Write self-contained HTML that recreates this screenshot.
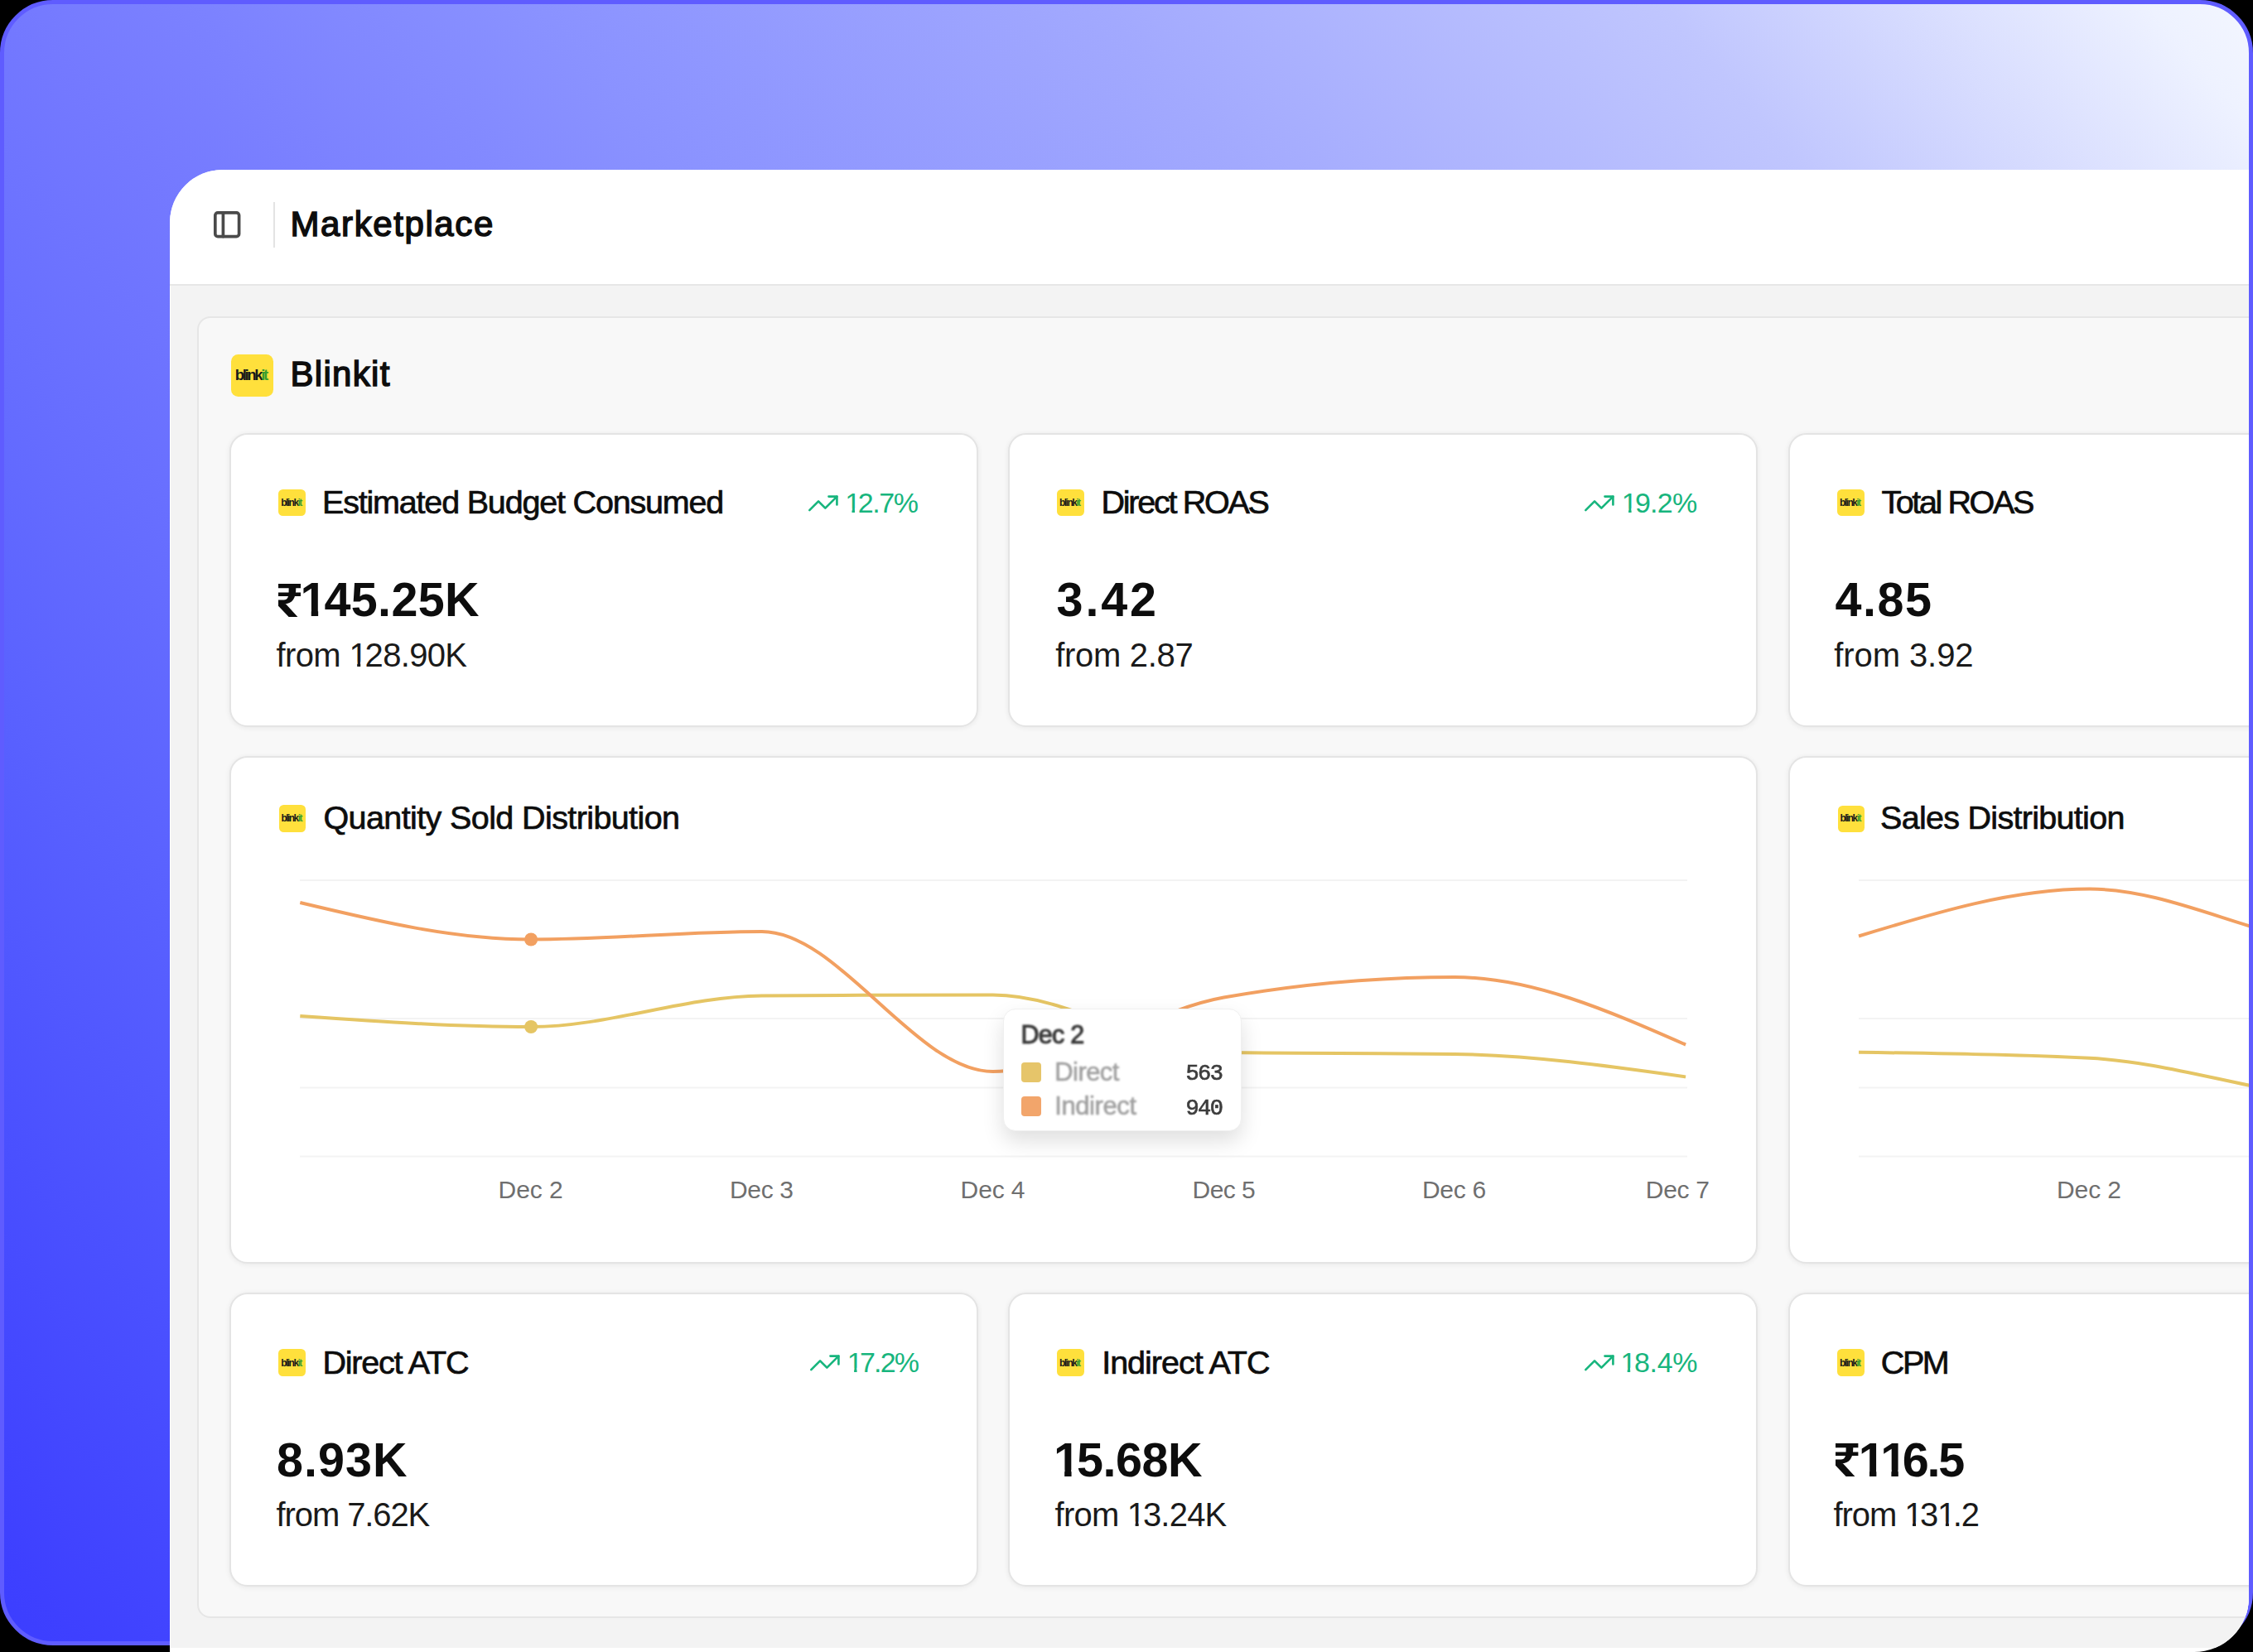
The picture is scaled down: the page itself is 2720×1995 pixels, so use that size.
<!DOCTYPE html><html><head><meta charset="utf-8"><style>
*{box-sizing:border-box;margin:0;padding:0}
html,body{width:2720px;height:1995px;overflow:hidden;background:#000}
body{position:relative;font-family:'Liberation Sans', sans-serif}
.abs,.t,.logo,.card,.panel,.tip{position:absolute}
.t{white-space:nowrap}
.frame{position:absolute;left:0;top:0;width:2720px;height:1987px;border-radius:64px;border:5px solid #5f5cff;
 background:linear-gradient(50deg, #3c3eff 0%, #3e40ff 2.08%, #4a50ff 11.55%, #5860ff 21.05%, #686fff 30.76%, #7479ff 38.14%, #8a92ff 52.69%, #a2a9fe 68.26%, #c0c6fe 83.82%, #eef2ff 97.24%, #f3f6ff 100%)}
.win{position:absolute;left:205px;top:205px;width:2510px;height:1790px;background:#fff;border-top-left-radius:64px;border-bottom-right-radius:66px;overflow:hidden}
.inner{position:absolute;left:-205px;top:-205px;width:2720px;height:1995px}
.hdr{position:absolute;left:205px;top:205px;width:2515px;height:140px;background:#fff;border-bottom:2px solid #e6e6e6}
.panel{left:237.8px;top:382px;width:2600px;height:1571.5px;background:#f8f8f8;border:2px solid #e6e6e6;border-radius:16px}
.card{background:#fff;border:2px solid #e4e4e4;border-radius:22px;box-shadow:0 1px 6px rgba(0,0,0,0.07)}
.logo{background:#ffe03c;display:flex;align-items:center;justify-content:center;overflow:hidden}
.logo span{font-family:'Liberation Sans', sans-serif;font-weight:700;color:#1a1a1a;line-height:1}
.logo b{color:#3a9e2f;font-weight:700}
.tip{left:1211px;top:1217.6px;width:288.3px;height:148px;background:#fff;border-radius:15px;border:1px solid #f0f0f0;box-shadow:0 12px 26px rgba(0,0,0,0.13)}
</style></head><body>
<div class="frame"></div>
<div class="win"><div class="inner">
<div class="hdr"></div><div class="abs" style="left:206.2px;top:345px;width:2520px;height:1645px;background:#f3f3f3"></div>
<svg class="abs" style="left:255.4px;top:251.8px" width="38.4" height="38.4" viewBox="0 0 24 24" fill="none" stroke="#4a4a4a" stroke-width="2.3" stroke-linecap="round" stroke-linejoin="round"><rect x="3" y="3" width="18" height="18" rx="2"/><path d="M9 3v18"/></svg>
<div class="abs" style="left:330px;top:244px;width:2px;height:55px;background:#e3e3e3"></div>
<div class="t" style="left:350.50px;top:250.14px;font-size:42.00px;line-height:42.00px;font-weight:400;color:#0d0d0d;letter-spacing:1.600px;font-family:'Liberation Sans', sans-serif;-webkit-text-stroke:1.5px #0d0d0d;">Marketplace</div>
<div class="panel"></div>
<div class="logo" style="left:279.30px;top:428.00px;width:50.50px;height:50.50px;border-radius:8.5px"><span style="font-size:18.68px;letter-spacing:-2.43px;margin-top:1.01px;margin-left:-3.54px">blink<b style="-webkit-text-stroke-color:#3a9e2f">it</b></span></div>
<div class="t" style="left:350.50px;top:430.94px;font-size:42.00px;line-height:42.00px;font-weight:400;color:#0d0d0d;letter-spacing:1.301px;font-family:'Liberation Sans', sans-serif;-webkit-text-stroke:1.5px #0d0d0d;">Blinkit</div>
<div class="card" style="left:276.7px;top:522.5px;width:904.5px;height:355.5px"></div>
<div class="logo" style="left:336.40px;top:590.90px;width:32.50px;height:32.50px;border-radius:5.5px"><span style="font-size:12.03px;letter-spacing:-1.56px;margin-top:0.65px;margin-left:-2.28px">blink<b style="-webkit-text-stroke-color:#3a9e2f">it</b></span></div>
<div class="card" style="left:276.7px;top:1560.8px;width:904.5px;height:355.5px"></div>
<div class="logo" style="left:336.40px;top:1629.20px;width:32.50px;height:32.50px;border-radius:5.5px"><span style="font-size:12.03px;letter-spacing:-1.56px;margin-top:0.65px;margin-left:-2.28px">blink<b style="-webkit-text-stroke-color:#3a9e2f">it</b></span></div>
<div class="card" style="left:1217.4px;top:522.5px;width:904.5px;height:355.5px"></div>
<div class="logo" style="left:1276.20px;top:590.90px;width:32.50px;height:32.50px;border-radius:5.5px"><span style="font-size:12.03px;letter-spacing:-1.56px;margin-top:0.65px;margin-left:-2.28px">blink<b style="-webkit-text-stroke-color:#3a9e2f">it</b></span></div>
<div class="card" style="left:1217.4px;top:1560.8px;width:904.5px;height:355.5px"></div>
<div class="logo" style="left:1276.20px;top:1629.20px;width:32.50px;height:32.50px;border-radius:5.5px"><span style="font-size:12.03px;letter-spacing:-1.56px;margin-top:0.65px;margin-left:-2.28px">blink<b style="-webkit-text-stroke-color:#3a9e2f">it</b></span></div>
<div class="card" style="left:2158.5px;top:522.5px;width:904.5px;height:355.5px"></div>
<div class="logo" style="left:2218.20px;top:590.90px;width:32.50px;height:32.50px;border-radius:5.5px"><span style="font-size:12.03px;letter-spacing:-1.56px;margin-top:0.65px;margin-left:-2.28px">blink<b style="-webkit-text-stroke-color:#3a9e2f">it</b></span></div>
<div class="card" style="left:2158.5px;top:1560.8px;width:904.5px;height:355.5px"></div>
<div class="logo" style="left:2218.20px;top:1629.20px;width:32.50px;height:32.50px;border-radius:5.5px"><span style="font-size:12.03px;letter-spacing:-1.56px;margin-top:0.65px;margin-left:-2.28px">blink<b style="-webkit-text-stroke-color:#3a9e2f">it</b></span></div>
<div class="card" style="left:276.7px;top:912.8px;width:1845.2px;height:613.2px"></div>
<div class="logo" style="left:336.70px;top:972.30px;width:32.30px;height:32.30px;border-radius:5.5px"><span style="font-size:11.95px;letter-spacing:-1.55px;margin-top:0.65px;margin-left:-2.26px">blink<b style="-webkit-text-stroke-color:#3a9e2f">it</b></span></div>
<div class="card" style="left:2158.5px;top:912.8px;width:904.5px;height:613.2px"></div>
<div class="logo" style="left:2218.70px;top:972.50px;width:32.30px;height:32.30px;border-radius:5.5px"><span style="font-size:11.95px;letter-spacing:-1.55px;margin-top:0.65px;margin-left:-2.26px">blink<b style="-webkit-text-stroke-color:#3a9e2f">it</b></span></div>
<div class="t" style="left:389.00px;top:587.16px;font-size:39.50px;line-height:39.50px;font-weight:400;color:#0d0d0d;letter-spacing:-1.189px;font-family:'Liberation Sans', sans-serif;-webkit-text-stroke:0.7px #0d0d0d;">Estimated Budget Consumed</div>
<div class="t" style="left:1329.60px;top:587.16px;font-size:39.50px;line-height:39.50px;font-weight:400;color:#0d0d0d;letter-spacing:-2.270px;font-family:'Liberation Sans', sans-serif;-webkit-text-stroke:0.7px #0d0d0d;">Direct ROAS</div>
<div class="t" style="left:2271.40px;top:587.16px;font-size:39.50px;line-height:39.50px;font-weight:400;color:#0d0d0d;letter-spacing:-2.390px;font-family:'Liberation Sans', sans-serif;-webkit-text-stroke:0.7px #0d0d0d;">Total ROAS</div>
<div class="t" style="left:389.40px;top:1625.86px;font-size:39.50px;line-height:39.50px;font-weight:400;color:#0d0d0d;letter-spacing:-1.213px;font-family:'Liberation Sans', sans-serif;-webkit-text-stroke:0.7px #0d0d0d;">Direct ATC</div>
<div class="t" style="left:1330.20px;top:1625.86px;font-size:39.50px;line-height:39.50px;font-weight:400;color:#0d0d0d;letter-spacing:-1.015px;font-family:'Liberation Sans', sans-serif;-webkit-text-stroke:0.7px #0d0d0d;">Indirect ATC</div>
<div class="t" style="left:2270.80px;top:1625.86px;font-size:39.50px;line-height:39.50px;font-weight:400;color:#0d0d0d;letter-spacing:-2.400px;font-family:'Liberation Sans', sans-serif;-webkit-text-stroke:0.7px #0d0d0d;">CPM</div>
<div class="t" style="left:1020.20px;top:589.91px;font-size:34.00px;line-height:34.00px;font-weight:400;color:#17b57d;letter-spacing:-1.400px;font-family:'Liberation Sans', sans-serif;"><span style="display:inline-block;letter-spacing:-3.44px;clip-path:polygon(-10px -10px, 200% -10px, 200% 23.75px, 11.80px 23.75px, 11.80px 200%, 8.30px 200%, 8.30px 23.75px, -10px 23.75px)">1</span>2.7%</div>
<div class="t" style="left:1957.80px;top:589.91px;font-size:34.00px;line-height:34.00px;font-weight:400;color:#17b57d;letter-spacing:-0.725px;font-family:'Liberation Sans', sans-serif;"><span style="display:inline-block;letter-spacing:-2.77px;clip-path:polygon(-10px -10px, 200% -10px, 200% 23.75px, 11.80px 23.75px, 11.80px 200%, 8.30px 200%, 8.30px 23.75px, -10px 23.75px)">1</span>9.2%</div>
<div class="t" style="left:1022.80px;top:1628.11px;font-size:34.00px;line-height:34.00px;font-weight:400;color:#17b57d;letter-spacing:-1.775px;font-family:'Liberation Sans', sans-serif;"><span style="display:inline-block;letter-spacing:-3.81px;clip-path:polygon(-10px -10px, 200% -10px, 200% 23.75px, 11.80px 23.75px, 11.80px 200%, 8.30px 200%, 8.30px 23.75px, -10px 23.75px)">1</span>7.2%</div>
<div class="t" style="left:1956.40px;top:1628.11px;font-size:34.00px;line-height:34.00px;font-weight:400;color:#17b57d;letter-spacing:-0.325px;font-family:'Liberation Sans', sans-serif;"><span style="display:inline-block;letter-spacing:-2.37px;clip-path:polygon(-10px -10px, 200% -10px, 200% 23.75px, 11.80px 23.75px, 11.80px 200%, 8.30px 200%, 8.30px 23.75px, -10px 23.75px)">1</span>8.4%</div>
<div class="t" style="left:362.60px;top:696.12px;font-size:57.50px;line-height:57.50px;font-weight:700;color:#0d0d0d;letter-spacing:0.333px;font-family:'Liberation Sans', sans-serif;"><span style="display:inline-block;letter-spacing:-3.12px;clip-path:polygon(-10px -10px, 200% -10px, 200% 40.32px, 21.56px 40.32px, 21.56px 200%, 13.17px 200%, 13.17px 40.32px, -10px 40.32px)">1</span>45.25K</div>
<div class="t" style="left:1275.60px;top:696.12px;font-size:57.50px;line-height:57.50px;font-weight:700;color:#0d0d0d;letter-spacing:2.804px;font-family:'Liberation Sans', sans-serif;">3.42</div>
<div class="t" style="left:2215.60px;top:696.12px;font-size:57.50px;line-height:57.50px;font-weight:700;color:#0d0d0d;letter-spacing:1.526px;font-family:'Liberation Sans', sans-serif;">4.85</div>
<div class="t" style="left:334.00px;top:1734.62px;font-size:57.50px;line-height:57.50px;font-weight:700;color:#0d0d0d;letter-spacing:1.050px;font-family:'Liberation Sans', sans-serif;">8.93K</div>
<div class="t" style="left:1272.00px;top:1734.62px;font-size:57.50px;line-height:57.50px;font-weight:700;color:#0d0d0d;letter-spacing:-0.480px;font-family:'Liberation Sans', sans-serif;"><span style="display:inline-block;letter-spacing:-3.93px;clip-path:polygon(-10px -10px, 200% -10px, 200% 40.32px, 21.56px 40.32px, 21.56px 200%, 13.17px 200%, 13.17px 40.32px, -10px 40.32px)">1</span>5.68K</div>
<div class="t" style="left:2243.80px;top:1734.62px;font-size:57.50px;line-height:57.50px;font-weight:700;color:#0d0d0d;letter-spacing:-2.125px;font-family:'Liberation Sans', sans-serif;"><span style="display:inline-block;letter-spacing:-5.57px;clip-path:polygon(-10px -10px, 200% -10px, 200% 40.32px, 21.56px 40.32px, 21.56px 200%, 13.17px 200%, 13.17px 40.32px, -10px 40.32px)">1</span><span style="display:inline-block;letter-spacing:-5.57px;clip-path:polygon(-10px -10px, 200% -10px, 200% 40.32px, 21.56px 40.32px, 21.56px 200%, 13.17px 200%, 13.17px 40.32px, -10px 40.32px)">1</span>6.5</div>
<div class="t" style="left:333.60px;top:770.93px;font-size:40.00px;line-height:40.00px;font-weight:400;color:#1a1a1a;letter-spacing:-0.667px;font-family:'Liberation Sans', sans-serif;">from <span style="display:inline-block;letter-spacing:-3.07px;clip-path:polygon(-10px -10px, 200% -10px, 200% 28.38px, 13.84px 28.38px, 13.84px 200%, 9.81px 200%, 9.81px 28.38px, -10px 28.38px)">1</span>28.90K</div>
<div class="t" style="left:1274.20px;top:770.93px;font-size:40.00px;line-height:40.00px;font-weight:400;color:#1a1a1a;letter-spacing:-0.294px;font-family:'Liberation Sans', sans-serif;">from 2.87</div>
<div class="t" style="left:2214.20px;top:770.93px;font-size:40.00px;line-height:40.00px;font-weight:400;color:#1a1a1a;letter-spacing:-0.075px;font-family:'Liberation Sans', sans-serif;">from 3.92</div>
<div class="t" style="left:333.60px;top:1809.23px;font-size:40.00px;line-height:40.00px;font-weight:400;color:#1a1a1a;letter-spacing:-1.112px;font-family:'Liberation Sans', sans-serif;">from 7.62K</div>
<div class="t" style="left:1273.60px;top:1809.23px;font-size:40.00px;line-height:40.00px;font-weight:400;color:#1a1a1a;letter-spacing:-0.780px;font-family:'Liberation Sans', sans-serif;">from <span style="display:inline-block;letter-spacing:-3.18px;clip-path:polygon(-10px -10px, 200% -10px, 200% 28.38px, 13.84px 28.38px, 13.84px 200%, 9.81px 200%, 9.81px 28.38px, -10px 28.38px)">1</span>3.24K</div>
<div class="t" style="left:2213.60px;top:1809.23px;font-size:40.00px;line-height:40.00px;font-weight:400;color:#1a1a1a;letter-spacing:-1.109px;font-family:'Liberation Sans', sans-serif;">from <span style="display:inline-block;letter-spacing:-3.51px;clip-path:polygon(-10px -10px, 200% -10px, 200% 28.38px, 13.84px 28.38px, 13.84px 200%, 9.81px 200%, 9.81px 28.38px, -10px 28.38px)">1</span>3<span style="display:inline-block;letter-spacing:-3.51px;clip-path:polygon(-10px -10px, 200% -10px, 200% 28.38px, 13.84px 28.38px, 13.84px 200%, 9.81px 200%, 9.81px 28.38px, -10px 28.38px)">1</span>.2</div>
<div class="t" style="left:390.50px;top:968.46px;font-size:39.50px;line-height:39.50px;font-weight:400;color:#0d0d0d;letter-spacing:-0.608px;font-family:'Liberation Sans', sans-serif;-webkit-text-stroke:0.7px #0d0d0d;">Quantity Sold Distribution</div>
<div class="t" style="left:2270.00px;top:968.46px;font-size:39.50px;line-height:39.50px;font-weight:400;color:#0d0d0d;letter-spacing:-0.706px;font-family:'Liberation Sans', sans-serif;-webkit-text-stroke:0.7px #0d0d0d;">Sales Distribution</div>
<svg class="abs" style="left:973.71px;top:587.84px" width="39.72" height="39.72" viewBox="0 0 24 24" fill="none" stroke="#17b57d" stroke-width="1.6" stroke-linecap="round" stroke-linejoin="round"><polyline points="22 7 13.5 15.5 8.5 10.5 2 17"/><polyline points="16 7 22 7 22 13"/></svg>
<svg class="abs" style="left:1911.11px;top:587.84px" width="39.72" height="39.72" viewBox="0 0 24 24" fill="none" stroke="#17b57d" stroke-width="1.6" stroke-linecap="round" stroke-linejoin="round"><polyline points="22 7 13.5 15.5 8.5 10.5 2 17"/><polyline points="16 7 22 7 22 13"/></svg>
<svg class="abs" style="left:976.11px;top:1626.04px" width="39.72" height="39.72" viewBox="0 0 24 24" fill="none" stroke="#17b57d" stroke-width="1.6" stroke-linecap="round" stroke-linejoin="round"><polyline points="22 7 13.5 15.5 8.5 10.5 2 17"/><polyline points="16 7 22 7 22 13"/></svg>
<svg class="abs" style="left:1911.11px;top:1626.04px" width="39.72" height="39.72" viewBox="0 0 24 24" fill="none" stroke="#17b57d" stroke-width="1.6" stroke-linecap="round" stroke-linejoin="round"><polyline points="22 7 13.5 15.5 8.5 10.5 2 17"/><polyline points="16 7 22 7 22 13"/></svg>
<svg class="abs" style="left:335.60px;top:704.60px" width="27.40" height="40.20" viewBox="0 0 26.5 40" preserveAspectRatio="none"><path fill="#0d0d0d" d="M0,0H26.5V5.3H0Z M0,10.4H26.5V15H0Z M12.2,4 H20.6 C20.8,17 17,24.2 6.5,24.2 H0 V19.5 H6.5 C11.5,19.5 12.4,15 12.2,4Z M0,23.6 L8.2,23.6 L22.8,40 H12.4 L0,26.6Z"/></svg>
<svg class="abs" style="left:2216.20px;top:1743.00px" width="27.40" height="40.20" viewBox="0 0 26.5 40" preserveAspectRatio="none"><path fill="#0d0d0d" d="M0,0H26.5V5.3H0Z M0,10.4H26.5V15H0Z M12.2,4 H20.6 C20.8,17 17,24.2 6.5,24.2 H0 V19.5 H6.5 C11.5,19.5 12.4,15 12.2,4Z M0,23.6 L8.2,23.6 L22.8,40 H12.4 L0,26.6Z"/></svg>
<svg class="abs" style="left:0;top:0" width="2720" height="1995" viewBox="0 0 2720 1995"><line x1="362" x2="2037" y1="1063" y2="1063" stroke="#f3f3f3" stroke-width="2"/><line x1="2244" x2="2720" y1="1063" y2="1063" stroke="#f3f3f3" stroke-width="2"/><line x1="362" x2="2037" y1="1230" y2="1230" stroke="#f3f3f3" stroke-width="2"/><line x1="2244" x2="2720" y1="1230" y2="1230" stroke="#f3f3f3" stroke-width="2"/><line x1="362" x2="2037" y1="1313.5" y2="1313.5" stroke="#f3f3f3" stroke-width="2"/><line x1="2244" x2="2720" y1="1313.5" y2="1313.5" stroke="#f3f3f3" stroke-width="2"/><line x1="362" x2="2037" y1="1396.5" y2="1396.5" stroke="#f3f3f3" stroke-width="2"/><line x1="2244" x2="2720" y1="1396.5" y2="1396.5" stroke="#f3f3f3" stroke-width="2"/><path d="M362.30,1227.00 C455.23,1233.50 548.17,1240.00 641.10,1240.00 C734.03,1240.00 826.97,1203.17 919.90,1202.50 C1012.83,1201.83 1105.77,1201.50 1198.70,1201.50 C1291.63,1201.50 1384.57,1269.67 1477.50,1271.00 C1570.43,1272.33 1663.37,1271.67 1756.30,1273.00 C1849.23,1274.33 1942.17,1287.37 2035.10,1300.40" fill="none" stroke="#e5c564" stroke-width="4"/><path d="M362.30,1090.00 C455.23,1112.25 548.17,1134.50 641.10,1134.50 C734.03,1134.50 826.97,1125.00 919.90,1125.00 C1012.83,1125.00 1105.77,1294.00 1198.70,1294.00 C1291.63,1294.00 1384.57,1220.83 1477.50,1204.50 C1570.43,1188.17 1663.37,1180.00 1756.30,1180.00 C1849.23,1180.00 1942.17,1220.80 2035.10,1261.60" fill="none" stroke="#f2a061" stroke-width="4"/><circle cx="641.1" cy="1134.5" r="8" fill="#f2a061"/><circle cx="641.1" cy="1240" r="8" fill="#e5c564"/><path d="M2244.00,1270.80 C2336.93,1271.97 2429.87,1273.13 2522.80,1277.80 C2615.73,1282.47 2708.67,1315.00 2801.60,1325.00 C2894.53,1335.00 2987.47,1337.50 3080.40,1340.00" fill="none" stroke="#e5c564" stroke-width="4"/><path d="M2244.00,1130.50 C2336.93,1102.05 2429.87,1073.60 2522.80,1073.60 C2615.73,1073.60 2708.67,1125.67 2801.60,1139.00 C2894.53,1152.33 2987.47,1155.67 3080.40,1159.00" fill="none" stroke="#f2a061" stroke-width="4"/></svg>
<div class="t" style="left:601.60px;top:1422.40px;font-size:30.00px;line-height:30.00px;font-weight:400;color:#6f6f6f;letter-spacing:-0.100px;font-family:'Liberation Sans', sans-serif;">Dec 2</div>
<div class="t" style="left:881.00px;top:1422.40px;font-size:30.00px;line-height:30.00px;font-weight:400;color:#6f6f6f;letter-spacing:-0.350px;font-family:'Liberation Sans', sans-serif;">Dec 3</div>
<div class="t" style="left:1159.60px;top:1422.40px;font-size:30.00px;line-height:30.00px;font-weight:400;color:#6f6f6f;letter-spacing:-0.125px;font-family:'Liberation Sans', sans-serif;">Dec 4</div>
<div class="t" style="left:1439.60px;top:1422.40px;font-size:30.00px;line-height:30.00px;font-weight:400;color:#6f6f6f;letter-spacing:-0.550px;font-family:'Liberation Sans', sans-serif;">Dec 5</div>
<div class="t" style="left:1717.00px;top:1422.40px;font-size:30.00px;line-height:30.00px;font-weight:400;color:#6f6f6f;letter-spacing:-0.325px;font-family:'Liberation Sans', sans-serif;">Dec 6</div>
<div class="t" style="left:1986.80px;top:1422.40px;font-size:30.00px;line-height:30.00px;font-weight:400;color:#6f6f6f;letter-spacing:-0.300px;font-family:'Liberation Sans', sans-serif;">Dec 7</div>
<div class="t" style="left:2483.00px;top:1422.40px;font-size:30.00px;line-height:30.00px;font-weight:400;color:#6f6f6f;letter-spacing:-0.100px;font-family:'Liberation Sans', sans-serif;">Dec 2</div>
<div class="tip"></div>
<div class="abs" style="left:1233px;top:1283px;width:23.5px;height:24.2px;border-radius:4px;background:#e6c56a;filter:blur(0.6px)"></div>
<div class="abs" style="left:1233px;top:1324.2px;width:23.5px;height:24.2px;border-radius:4px;background:#f2a56b;filter:blur(0.6px)"></div>
<div class="t" style="left:1232.60px;top:1233.68px;font-size:30.50px;line-height:30.50px;font-weight:400;color:#383838;letter-spacing:-0.750px;font-family:'Liberation Sans', sans-serif;filter:blur(0.8px);-webkit-text-stroke:1.1px #383838;">Dec 2</div>
<div class="t" style="left:1273.20px;top:1278.65px;font-size:31.00px;line-height:31.00px;font-weight:400;color:#a0a0a0;letter-spacing:-0.540px;font-family:'Liberation Sans', sans-serif;filter:blur(0.8px);-webkit-text-stroke:0.6px #a0a0a0;">Direct</div>
<div class="t" style="left:1273.20px;top:1319.95px;font-size:31.00px;line-height:31.00px;font-weight:400;color:#a0a0a0;letter-spacing:-0.395px;font-family:'Liberation Sans', sans-serif;filter:blur(0.8px);-webkit-text-stroke:0.6px #a0a0a0;">Indirect</div>
<div class="t" style="left:1431.50px;top:1284.21px;font-size:27.00px;line-height:27.00px;font-weight:400;color:#3d3d3d;letter-spacing:-1.600px;font-family:'Liberation Mono', monospace;filter:blur(0.7px);-webkit-text-stroke:0.7px #3d3d3d;">563</div>
<div class="t" style="left:1431.50px;top:1325.51px;font-size:27.00px;line-height:27.00px;font-weight:400;color:#3d3d3d;letter-spacing:-1.600px;font-family:'Liberation Mono', monospace;filter:blur(0.7px);-webkit-text-stroke:0.7px #3d3d3d;">940</div>
</div></div>
</body></html>
